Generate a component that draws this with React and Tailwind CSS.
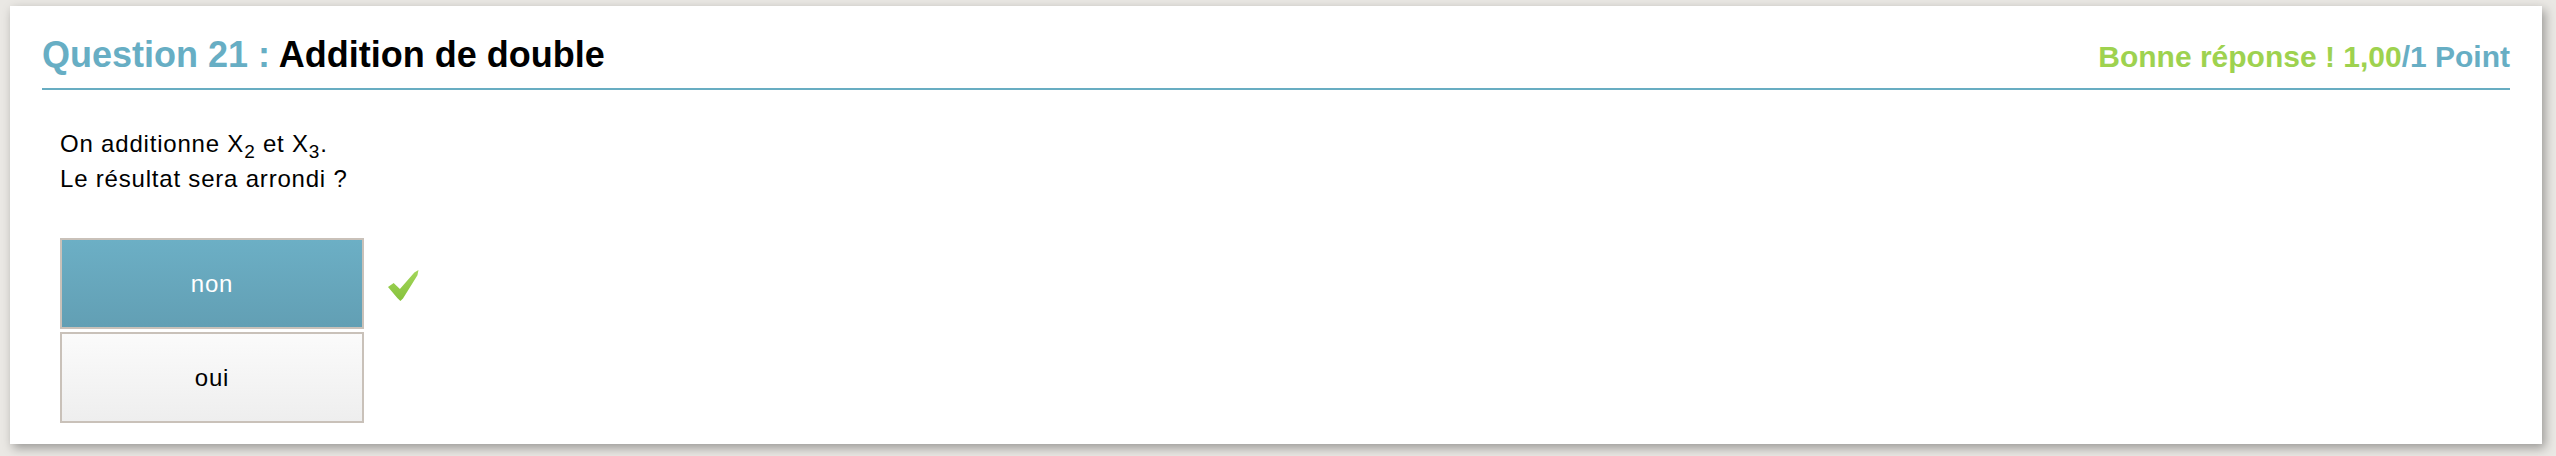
function CheckMark() {
  return (
    <svg width="31" height="31" viewBox="0 0 30 30" className="shrink-0">
      <defs>
        <linearGradient id="chk" x1="0" y1="0" x2="0" y2="1">
          <stop offset="0" stopColor="#a3d65a" />
          <stop offset="1" stopColor="#86c23c" />
        </linearGradient>
      </defs>
      <path d="M0 16.5 L5.5 12.5 L11.5 18.5 L25.5 2.5 L29.5 0 L28.5 5 L14.5 27.5 L12 30 L9 27 Z" fill="url(#chk)" />
    </svg>
  );
}

function Choice({ label, selected }) {
  return (
    <div
      className={`flex h-[91px] items-center justify-center border-2 border-[#c9c1b9] text-[24px] tracking-[0.8px] ${
        selected
          ? "bg-gradient-to-b from-[#6cafc5] to-[#629fb4] text-white"
          : "bg-gradient-to-b from-[#fbfbfb] to-[#eeeeee] text-black"
      }`}
    >
      {label}
    </div>
  );
}

export default function App() {
  return (
    <div
      className="min-h-[456px] bg-[#eae8e4] pb-[12px] pl-[10px] pr-[14px] pt-[6px]"
      style={{ fontFamily: '"Liberation Sans", Arial, sans-serif' }}
    >
      <div className="h-[438px] bg-white px-[32px] pt-[27px] shadow-[3px_4px_10px_rgba(0,0,0,0.35)]">
        <div className="flex items-baseline justify-between border-b-2 border-[#68adc2] pb-[9px]">
          <h1 className="text-[36px] font-bold leading-[44px]">
            <span className="text-[#67aec4]">Question 21 : </span>
            <span className="text-black">Addition de double</span>
          </h1>
          <div className="text-[30px] font-bold leading-[44px]">
            <span className="text-[#9ed24f]">Bonne réponse ! 1,00</span>
            <span className="text-[#67aec4]">/1 Point</span>
          </div>
        </div>

        <div className="mt-[36px] pl-[18px] text-[24px] leading-[35px] tracking-[0.8px] text-black">
          <p>
            On additionne X
            <sub className="relative top-[6px] text-[19px] leading-none">2</sub> et X
            <sub className="relative top-[6px] text-[19px] leading-none">3</sub>.
          </p>
          <p>Le résultat sera arrondi ?</p>
        </div>

        <div className="mt-[42px] flex items-start pl-[18px]">
          <div className="flex w-[304px] flex-col gap-[3px]">
            <Choice label="non" selected />
            <Choice label="oui" />
          </div>
          <div className="ml-[24px] mt-[32px]">
            <CheckMark />
          </div>
        </div>
      </div>
    </div>
  );
}
